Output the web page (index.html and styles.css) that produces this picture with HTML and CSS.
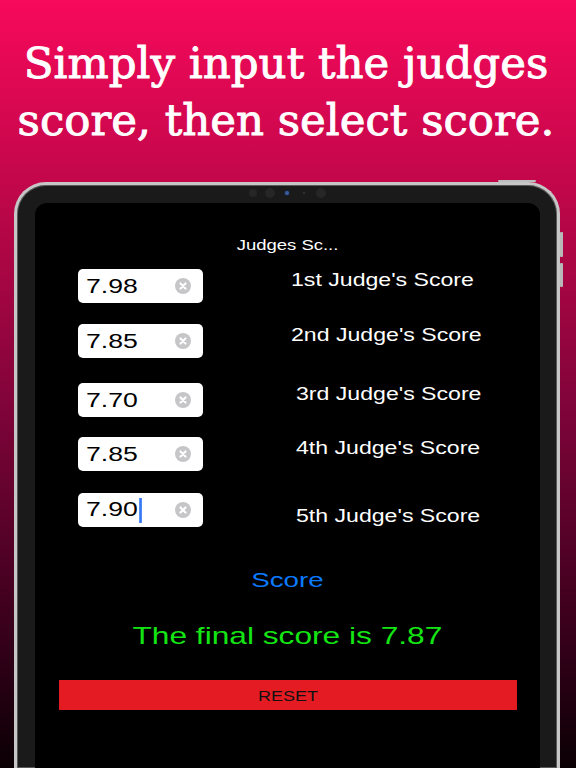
FILE: index.html
```html
<!DOCTYPE html>
<html lang="en">
<head>
<meta charset="utf-8">
<title>Judges Score</title>
<link rel="stylesheet" href="styles.css">
</head>
<body>
<h1 class="headline">Simply input the judges<br>score, then select score.</h1>
<div class="device">
  <span class="btn-top"></span>
  <span class="btn-side btn-side-1"></span>
  <span class="btn-side btn-side-2"></span>
  <div class="cameras">
    <span class="slot"><span class="cam cam-a"></span></span>
    <span class="slot"><span class="cam cam-b"></span></span>
    <span class="slot"><span class="cam cam-c"></span></span>
    <span class="slot"><span class="cam cam-d"></span></span>
    <span class="slot"><span class="cam cam-b"></span></span>
  </div>
  <div class="screen">
    <div class="title"><span class="wide">Judges Sc...</span></div>
    <div class="rows">
      <div class="row">
        <div class="field"><span class="value">7.98</span><svg class="clear" viewBox="0 0 14 14"><circle cx="7" cy="7" r="7"/><path d="M4.8 4.8 9.2 9.2M9.2 4.8 4.8 9.2"/></svg></div>
        <div class="label"><span class="wide-l">1st Judge's Score</span></div>
      </div>
      <div class="row">
        <div class="field"><span class="value">7.85</span><svg class="clear" viewBox="0 0 14 14"><circle cx="7" cy="7" r="7"/><path d="M4.8 4.8 9.2 9.2M9.2 4.8 4.8 9.2"/></svg></div>
        <div class="label"><span class="wide-l">2nd Judge's Score</span></div>
      </div>
      <div class="row row-3">
        <div class="field"><span class="value">7.70</span><svg class="clear" viewBox="0 0 14 14"><circle cx="7" cy="7" r="7"/><path d="M4.8 4.8 9.2 9.2M9.2 4.8 4.8 9.2"/></svg></div>
        <div class="label label-shift"><span class="wide-l">3rd Judge's Score</span></div>
      </div>
      <div class="row row-4">
        <div class="field"><span class="value">7.85</span><svg class="clear" viewBox="0 0 14 14"><circle cx="7" cy="7" r="7"/><path d="M4.8 4.8 9.2 9.2M9.2 4.8 4.8 9.2"/></svg></div>
        <div class="label label-shift"><span class="wide-l">4th Judge's Score</span></div>
      </div>
      <div class="row row-5">
        <div class="field"><span class="value caret">7.90</span><svg class="clear" viewBox="0 0 14 14"><circle cx="7" cy="7" r="7"/><path d="M4.8 4.8 9.2 9.2M9.2 4.8 4.8 9.2"/></svg></div>
        <div class="label label-shift label-low"><span class="wide-l">5th Judge's Score</span></div>
      </div>
    </div>
    <div class="score"><span class="wide">Score</span></div>
    <div class="final"><span class="wide">The final score is 7.87</span></div>
    <div class="reset"><span class="wide-r">RESET</span></div>
  </div>
</div>
</body>
</html>
```
FILE: styles.css
```css
html, body {
  margin: 0;
  padding: 0;
}
body {
  width: 576px;
  height: 768px;
  overflow: hidden;
  background: linear-gradient(180deg, #f7095b 0px, #c3074a 180px, #82043a 400px, #35001a 640px, #0a0004 768px);
  font-family: "Liberation Sans", Arial, sans-serif;
}
.headline {
  margin: 0;
  padding: 35px 10px 0 6px;
  font-family: "DejaVu Serif", serif;
  font-weight: normal;
  font-size: 43.5px;
  line-height: 57px;
  height: 114px;
  color: #fff;
  -webkit-text-stroke: 0.9px #fff;
  text-align: center;
  white-space: nowrap;
}
.device {
  position: relative;
  box-sizing: border-box;
  margin: 33px 0 0 14px;
  width: 546px;
  height: 586px;
  border: 3px solid #c6c6c6;
  border-bottom: none;
  border-radius: 32px 32px 0 0;
  background: #1a1a1a;
  padding: 18px 17px 0 18px;
  box-shadow: inset 0 0 0 1px #5a5a5a;
}
.btn-top {
  position: absolute;
  top: -5px;
  left: 481px;
  width: 38px;
  height: 2px;
  background: #bdbdbd;
  border-radius: 1px;
}
.btn-side {
  position: absolute;
  right: -6px;
  width: 3px;
  background: #b8b8b8;
  border-radius: 1px;
}
.btn-side-1 { top: 47px; height: 25px; }
.btn-side-2 { top: 78px; height: 24px; }
.cameras {
  position: absolute;
  top: 3px;
  left: 0;
  right: 0;
  height: 10px;
  display: flex;
  justify-content: center;
}
.slot {
  width: 17px;
  height: 10px;
  display: flex;
  align-items: center;
  justify-content: center;
}
.cam {
  display: block;
  border-radius: 50%;
  background: #262626;
}
.cam-a { width: 8px; height: 8px; }
.cam-b { width: 10px; height: 10px; }
.cam-c {
  width: 6px;
  height: 6px;
  background: radial-gradient(circle, #3a5c9a 0 35%, #17223a 60%);
}
.cam-d { width: 2px; height: 2px; background: #3a3a3a; }
.screen {
  height: 100%;
  background: #000;
  border-radius: 12px 12px 0 0;
  display: flex;
  flex-direction: column;
}
.wide, .wide-l, .wide-r {
  display: inline-block;
  transform: scaleX(1.32);
}
.wide-l { transform-origin: left center; }
.wide-r { transform: scaleX(1.2); }
.title {
  margin-top: 34px;
  text-align: center;
  color: #fff;
  font-size: 14px;
  line-height: 17px;
}
.rows {
  margin-top: 15px;
  padding-left: 43px;
  display: flex;
  flex-direction: column;
}
.row {
  display: flex;
  align-items: flex-start;
}
.row + .row { margin-top: 21px; }
.row.row-3 { margin-top: 25px; }
.row.row-4 { margin-top: 20px; }
.row.row-5 { margin-top: 22px; }
.field {
  box-sizing: border-box;
  width: 125px;
  height: 34px;
  background: #fff;
  border-radius: 5px;
  display: flex;
  align-items: center;
  justify-content: space-between;
  padding: 0 12px 0 8px;
}
.value {
  display: inline-block;
  font-size: 20px;
  line-height: 24px;
  color: #000;
  transform: scaleX(1.33);
  transform-origin: left center;
}
.caret::after {
  content: "";
  display: inline-block;
  width: 1.6px;
  height: 25px;
  margin-left: 1px;
  vertical-align: middle;
  background: #3478f6;
}
.clear {
  width: 16px;
  height: 16px;
  flex: none;
}
.clear circle { fill: #c6c6c8; }
.clear path {
  stroke: #fff;
  stroke-width: 1.9;
  stroke-linecap: round;
  fill: none;
}
.label {
  margin: 1px 0 0 88px;
  color: #fff;
  font-size: 17.5px;
  line-height: 20px;
  white-space: nowrap;
}
.label-shift { margin-left: 93px; }
.label-low { margin-top: 13px; }
.score {
  margin-top: 40px;
  text-align: center;
  color: #0a7aff;
  font-size: 21px;
  line-height: 25px;
}
.final {
  margin-top: 30px;
  text-align: center;
  color: #14e614;
  font-size: 24px;
  line-height: 28px;
  white-space: nowrap;
}
.reset {
  margin: 30px 23px 0 24px;
  height: 30px;
  background: #e41b22;
  display: flex;
  align-items: center;
  justify-content: center;
  color: #111;
  font-size: 15px;
}
```
